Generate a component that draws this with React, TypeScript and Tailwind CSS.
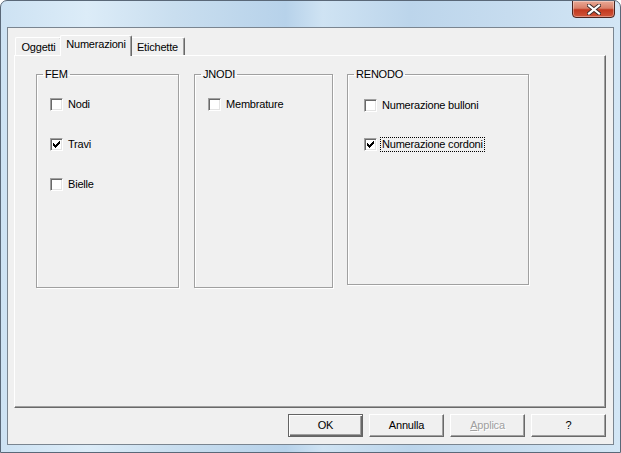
import React from 'react';

const font = "font-['Liberation_Sans',Arial,sans-serif] text-[11px] tracking-[-0.2px] text-black";

const CheckMark = () => (
  <svg width="7" height="7" viewBox="0 0 7 7" shapeRendering="crispEdges" className="block">
    <rect x="0" y="2" width="1" height="3" fill="#000" />
    <rect x="1" y="3" width="1" height="3" fill="#000" />
    <rect x="2" y="4" width="1" height="3" fill="#000" />
    <rect x="3" y="3" width="1" height="3" fill="#000" />
    <rect x="4" y="2" width="1" height="3" fill="#000" />
    <rect x="5" y="1" width="1" height="3" fill="#000" />
    <rect x="6" y="0" width="1" height="3" fill="#000" />
  </svg>
);

interface CheckProps {
  label: string;
  checked?: boolean;
  focused?: boolean;
}

const Check: React.FC<CheckProps> = ({ label, checked, focused }) => (
  <div className="flex items-center h-[13px]">
    <div className="w-[13px] h-[13px] shrink-0 bg-white border border-t-[#a0a0a0] border-l-[#a0a0a0] border-r-white border-b-white shadow-[inset_1px_1px_0_#696969,inset_-1px_-1px_0_#e3e3e3] flex items-center justify-center">
      {checked && <CheckMark />}
    </div>
    <span
      className={
        'ml-[3px] px-[1px] leading-[13px] whitespace-nowrap border border-dotted ' +
        (focused ? 'border-black' : 'border-transparent')
      }
    >
      {label}
    </span>
  </div>
);

interface GroupProps {
  title: string;
  width: string;
  children: React.ReactNode;
}

const Group: React.FC<GroupProps> = ({ title, width, children }) => (
  <fieldset
    className={
      width +
      ' border border-[#a0a0a0] shadow-[inset_1px_1px_0_#fff,1px_1px_0_#fff] min-w-0'
    }
  >
    <legend className="ml-[6px] px-[2px] leading-[13px]">{title}</legend>
    {children}
  </fieldset>
);

const Tab: React.FC<{ label: string; active?: boolean; width: string }> = ({ label, active, width }) =>
  active ? (
    <div
      className={
        width +
        ' relative z-10 -mx-[2px] -mb-px h-[21px] bg-[#f0f0f0] rounded-t-[2px] border-t border-l border-white border-r border-r-[#696969] shadow-[inset_-1px_0_0_#a0a0a0] flex justify-center pt-[2px] leading-[13px]'
      }
    >
      {label}
    </div>
  ) : (
    <div
      className={
        width +
        ' h-[18px] bg-[#f0f0f0] rounded-t-[2px] border-t border-l border-white border-r border-r-[#696969] shadow-[inset_-1px_0_0_#a0a0a0] flex justify-center pt-[3px] leading-[13px]'
      }
    >
      {label}
    </div>
  );

const Btn: React.FC<{ children: React.ReactNode; primary?: boolean; disabled?: boolean }> = ({
  children,
  primary,
  disabled,
}) => (
  <div
    className={
      'w-[75px] h-[23px] flex items-center justify-center leading-[13px] bg-[#f0f0f0] ' +
      (primary
        ? 'border border-[#646464] shadow-[inset_1px_1px_0_#fff,inset_-1px_-1px_0_#696969,inset_-2px_-2px_0_#a0a0a0]'
        : 'border border-t-white border-l-white border-r-[#696969] border-b-[#696969] shadow-[inset_-1px_-1px_0_#a0a0a0]') +
      (disabled ? ' text-[#a0a0a0] [text-shadow:1px_1px_0_#fff]' : '')
    }
  >
    {children}
  </div>
);

export default function App() {
  return (
    <div
      className={
        font +
        " w-[621px] h-[453px] flex flex-col rounded-t-[7px] border border-[#5a6878] bg-[linear-gradient(90deg,#cde2f3_0%,#dcecf8_14%,#c9deef_28%,#b7d2ea_46%,#cfe3f3_52%,#bcd5eb_66%,#c6dcef_82%,#d3e6f5_100%)] overflow-hidden"
      }
    >
      {/* title bar */}
      <div className="h-[26px] flex justify-end pr-[5px] shrink-0">
        <div className="w-[43px] h-[18px] -mt-px rounded-b-[4px] border border-[#4a2520] bg-[linear-gradient(180deg,#e9a995_0%,#d98069_45%,#c2391f_55%,#d0563a_100%)] shadow-[inset_0_0_0_1px_rgba(255,255,255,0.35)] flex items-center justify-center">
          <svg width="14" height="11" viewBox="0 0 14 11">
            <path
              d="M2 1.5 L12 9.5 M12 1.5 L2 9.5"
              stroke="#3b2a28"
              strokeWidth="4"
              strokeLinecap="square"
            />
            <path
              d="M2 1.5 L12 9.5 M12 1.5 L2 9.5"
              stroke="#ffffff"
              strokeWidth="2.2"
              strokeLinecap="square"
            />
          </svg>
        </div>
      </div>

      {/* client area */}
      <div className="mx-[6px] mb-[7px] flex-1 border border-[#7a8590] bg-[#f0f0f0] flex flex-col pt-[7px] pl-[6px] pr-[7px] pb-[7px]">
        <div className="h-[20px] flex items-end pl-px shrink-0">
          <Tab label="Oggetti" width="w-[47px]" />
          <Tab label="Numerazioni" width="w-[72px]" active />
          <Tab label="Etichette" width="w-[55px]" />
        </div>

        <div className="flex-1 border border-t-white border-l-white border-r-[#696969] border-b-[#696969] shadow-[inset_-1px_-1px_0_#a0a0a0] pt-[12px] pl-[21px]">
          <div className="flex items-start">
            <Group title="FEM" width="w-[143px] h-[220px]">
              <div className="flex flex-col gap-[27px] pt-[17px] pl-[13px]">
                <Check label="Nodi" />
                <Check label="Travi" checked />
                <Check label="Bielle" />
              </div>
            </Group>
            <Group title="JNODI" width="ml-[15px] w-[139px] h-[220px]">
              <div className="flex flex-col gap-[27px] pt-[17px] pl-[13px]">
                <Check label="Membrature" />
              </div>
            </Group>
            <Group title="RENODO" width="ml-[14px] w-[182px] h-[217px]">
              <div className="flex flex-col gap-[26px] pt-[18px] pl-[16px]">
                <Check label="Numerazione bulloni" />
                <Check label="Numerazione cordoni" checked focused />
              </div>
            </Group>
          </div>
        </div>

        <div className="mt-[6px] flex justify-end gap-[6px] shrink-0">
          <Btn primary>OK</Btn>
          <Btn>Annulla</Btn>
          <Btn disabled>
            <span className="underline">A</span>pplica
          </Btn>
          <Btn>?</Btn>
        </div>
      </div>
    </div>
  );
}
